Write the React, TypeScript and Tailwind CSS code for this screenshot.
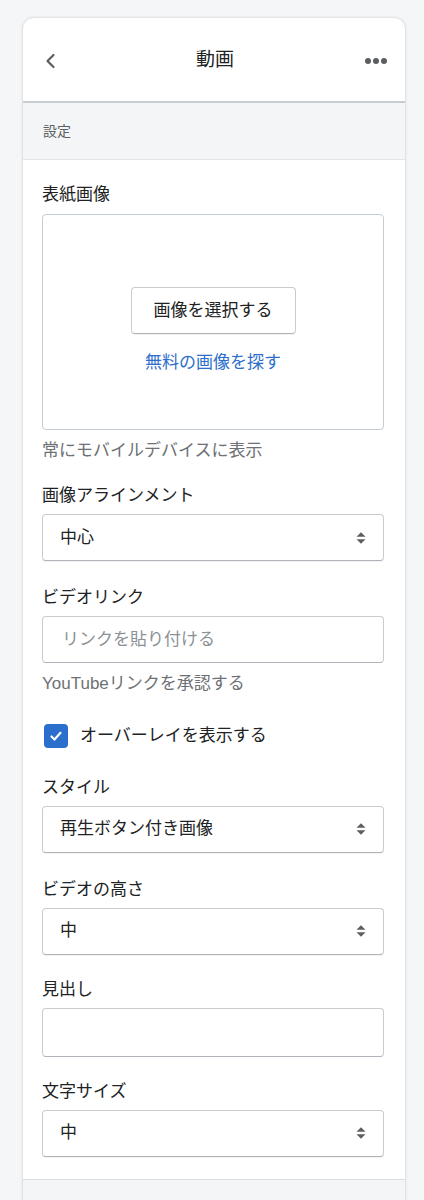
import React from "react";

const font = { fontFamily: '"Liberation Sans", "Noto Sans CJK JP", sans-serif' };

function Arrows() {
  return (
    <svg width="12" height="14" viewBox="0 0 12 14" className="shrink-0">
      <path d="M6 1.3 L10.5 5.8 H1.5 Z" fill="#5c5f62" />
      <path d="M6 12.7 L10.5 8.2 H1.5 Z" fill="#5c5f62" />
    </svg>
  );
}

function Label({ children, extra = "" }: { children: React.ReactNode; extra?: string }) {
  return <div className={"text-[17px] leading-[20px] text-[#202223] " + (extra || "mb-2")}>{children}</div>;
}

function Select({ value }: { value: string }) {
  return (
    <div className="h-[47px] flex items-center justify-between pl-[17px] pr-[16px] rounded-[4px] border border-[#c9cccf] border-b-[#aeb4b9] bg-white shadow-[0_1px_0_rgba(0,0,0,0.05)]">
      <span className="text-[17px] text-[#202223]">{value}</span>
      <Arrows />
    </div>
  );
}

export default function App() {
  return (
    <div className="min-h-[1200px] bg-[#f4f6f8] pt-[17px] pl-[22px] pr-[18px]" style={font}>
      <div className="bg-white rounded-t-[12px] border border-[#e1e3e5] shadow-[0_0_3px_rgba(0,0,0,0.08)] overflow-hidden">
        <div className="h-[85px] flex items-center justify-between pl-[20px] pr-[18px] border-b-2 border-[#c9cccf] pt-[2px]">
          <svg width="16" height="18" viewBox="0 0 16 18">
            <path d="M10.5 3 L4.5 9 L10.5 15" fill="none" stroke="#5c5f62" strokeWidth="2.2" strokeLinecap="round" strokeLinejoin="round" />
          </svg>
          <div className="text-[19px] text-[#202223] pl-[6px]">動画</div>
          <div className="flex gap-[2px] items-center">
            <span className="w-[6px] h-[6px] rounded-full bg-[#5c5f62]" />
            <span className="w-[6px] h-[6px] rounded-full bg-[#5c5f62]" />
            <span className="w-[6px] h-[6px] rounded-full bg-[#5c5f62]" />
          </div>
        </div>
        <div className="h-[57px] bg-[#f4f5f7] border-b border-[#e4e5e7] flex items-center px-[20px]">
          <span className="text-[14px] text-[#5c5f62]">設定</span>
        </div>
        <div className="pl-[19px] pr-[21px] pt-[25px] pb-[22px] border-b border-[#dcdee0]">
          <Label extra="mb-[9px]">表紙画像</Label>
          <div className="h-[216px] rounded-[4px] border-[1.5px] border-[#c4cdd5] flex flex-col items-center pt-[72px]">
            <div className="h-[47px] w-[165px] flex items-center justify-center rounded-[4px] border border-[#c9cccf] border-b-[#aeb4b9] text-[17px] text-[#202223] shadow-[0_1px_0_rgba(0,0,0,0.05)]">
              画像を選択する
            </div>
            <div className="mt-[17px] text-[17px] leading-[24px] text-[#2c6ecb]">無料の画像を探す</div>
          </div>
          <div className="mt-[10px] text-[17px] leading-[22px] text-[#6d7175]">常にモバイルデバイスに表示</div>

          <div className="mt-[24px]">
            <Label>画像アラインメント</Label>
            <Select value="中心" />
          </div>

          <div className="mt-[27px]">
            <Label>ビデオリンク</Label>
            <div className="h-[47px] flex items-center pl-[19px] rounded-[4px] border border-[#c9cccf] border-b-[#aeb4b9] bg-white">
              <span className="text-[17px] text-[#8c9196]">リンクを貼り付ける</span>
            </div>
            <div className="mt-[10px] text-[17px] leading-[22px] text-[#6d7175]">YouTubeリンクを承認する</div>
          </div>

          <div className="mt-[28px] flex items-center gap-[12px] pl-[2px]">
            <div className="w-[24px] h-[24px] rounded-[4px] bg-[#2c6ecb] flex items-center justify-center">
              <svg width="14" height="14" viewBox="0 0 14 14">
                <path d="M2.5 7.5 L5.5 10.5 L11.5 3.8" fill="none" stroke="white" strokeWidth="2.2" strokeLinecap="round" strokeLinejoin="round" />
              </svg>
            </div>
            <span className="text-[17px] text-[#202223]">オーバーレイを表示する</span>
          </div>

          <div className="mt-[29px]">
            <Label>スタイル</Label>
            <Select value="再生ボタン付き画像" />
          </div>

          <div className="mt-[27px]">
            <Label>ビデオの高さ</Label>
            <Select value="中" />
          </div>

          <div className="mt-[25px]">
            <Label>見出し</Label>
            <div className="h-[49px] rounded-[4px] border border-[#c9cccf] border-b-[#aeb4b9] bg-white" />
          </div>

          <div className="mt-[25px]">
            <Label>文字サイズ</Label>
            <Select value="中" />
          </div>
        </div>
        <div className="h-[40px] bg-[#f4f5f7]" />
      </div>
    </div>
  );
}
